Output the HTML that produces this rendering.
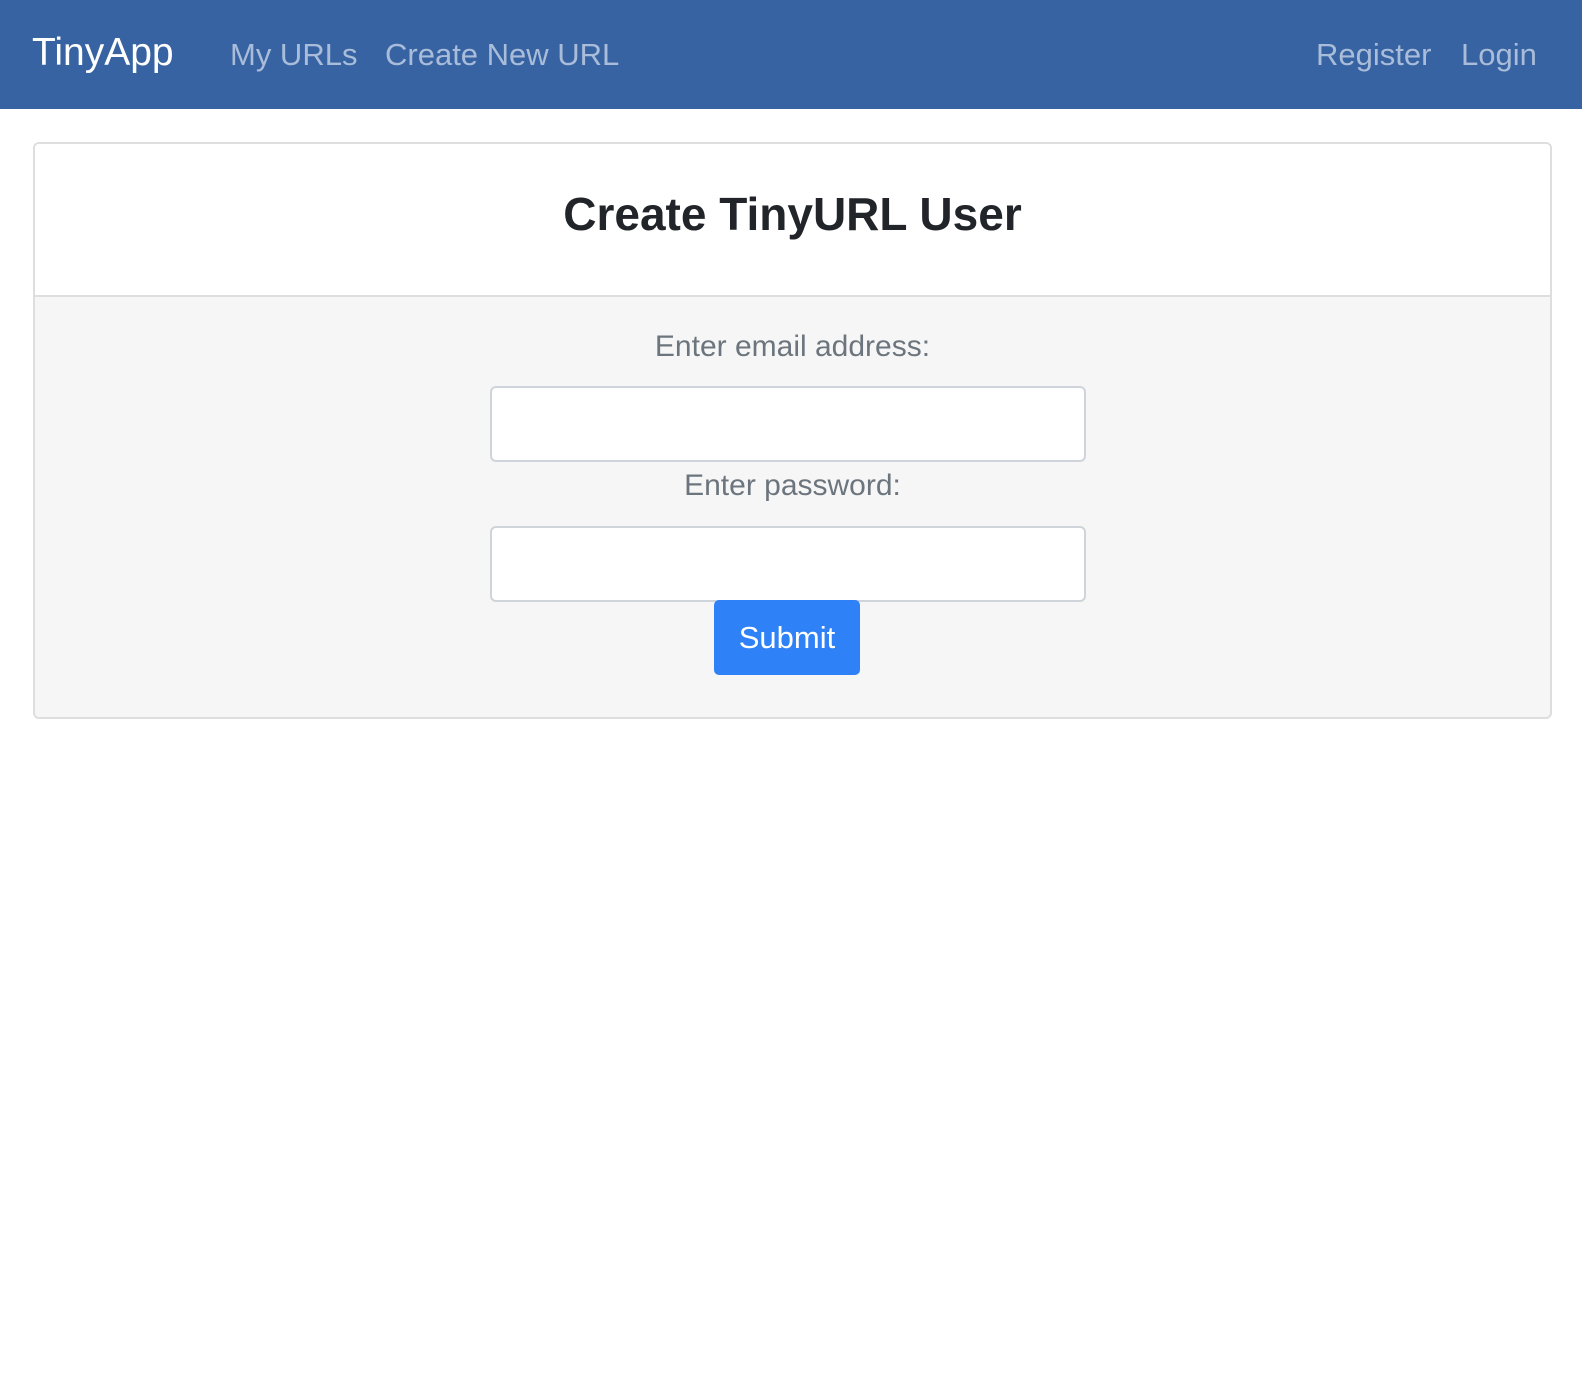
<!DOCTYPE html>
<html><head><style>
body{margin:0;background:#fff;font-family:"Liberation Sans",sans-serif;}
.nav{height:109px;background:#3763a2;position:relative;}
.nav span{position:absolute;top:31px;font-size:31px;color:#a9bcd9;line-height:48px}
.brand{left:32px;color:#fff!important;font-size:39px!important;top:29px!important}
.card{position:absolute;left:33px;top:142px;width:1515px;height:573px;border:2px solid #dedede;border-radius:6px;background:#f6f6f6;overflow:hidden}
.hd{height:151px;background:#fff;border-bottom:2px solid #dedede;text-align:center}
.hd h1{margin:0;padding-top:43px;font-size:46px;font-weight:bold;color:#212529}
.lbl{position:absolute;width:100%;text-align:center;font-size:30px;color:#6c757d}
.inp{position:absolute;left:455px;width:592px;height:72px;background:#fff;border:2px solid #ced4da;border-radius:6px}
.btn{position:absolute;left:679px;top:456px;width:146px;height:75px;background:#2f81f7;border-radius:5px;color:#fff;font-size:31px;text-align:center;line-height:75px}
</style></head><body>
<div class="nav"><span class="brand">TinyApp</span><span style="left:230px">My URLs</span><span style="left:385px">Create New URL</span><span style="left:1316px">Register</span><span style="left:1461px">Login</span></div>
<div class="card"><div class="hd"><h1>Create TinyURL User</h1></div>
<div class="lbl" style="top:186px">Enter email address:</div>
<div class="inp" style="top:242px"></div>
<div class="lbl" style="top:325px">Enter password:</div>
<div class="inp" style="top:382px"></div>
<div class="btn">Submit</div></div>
</body></html>
